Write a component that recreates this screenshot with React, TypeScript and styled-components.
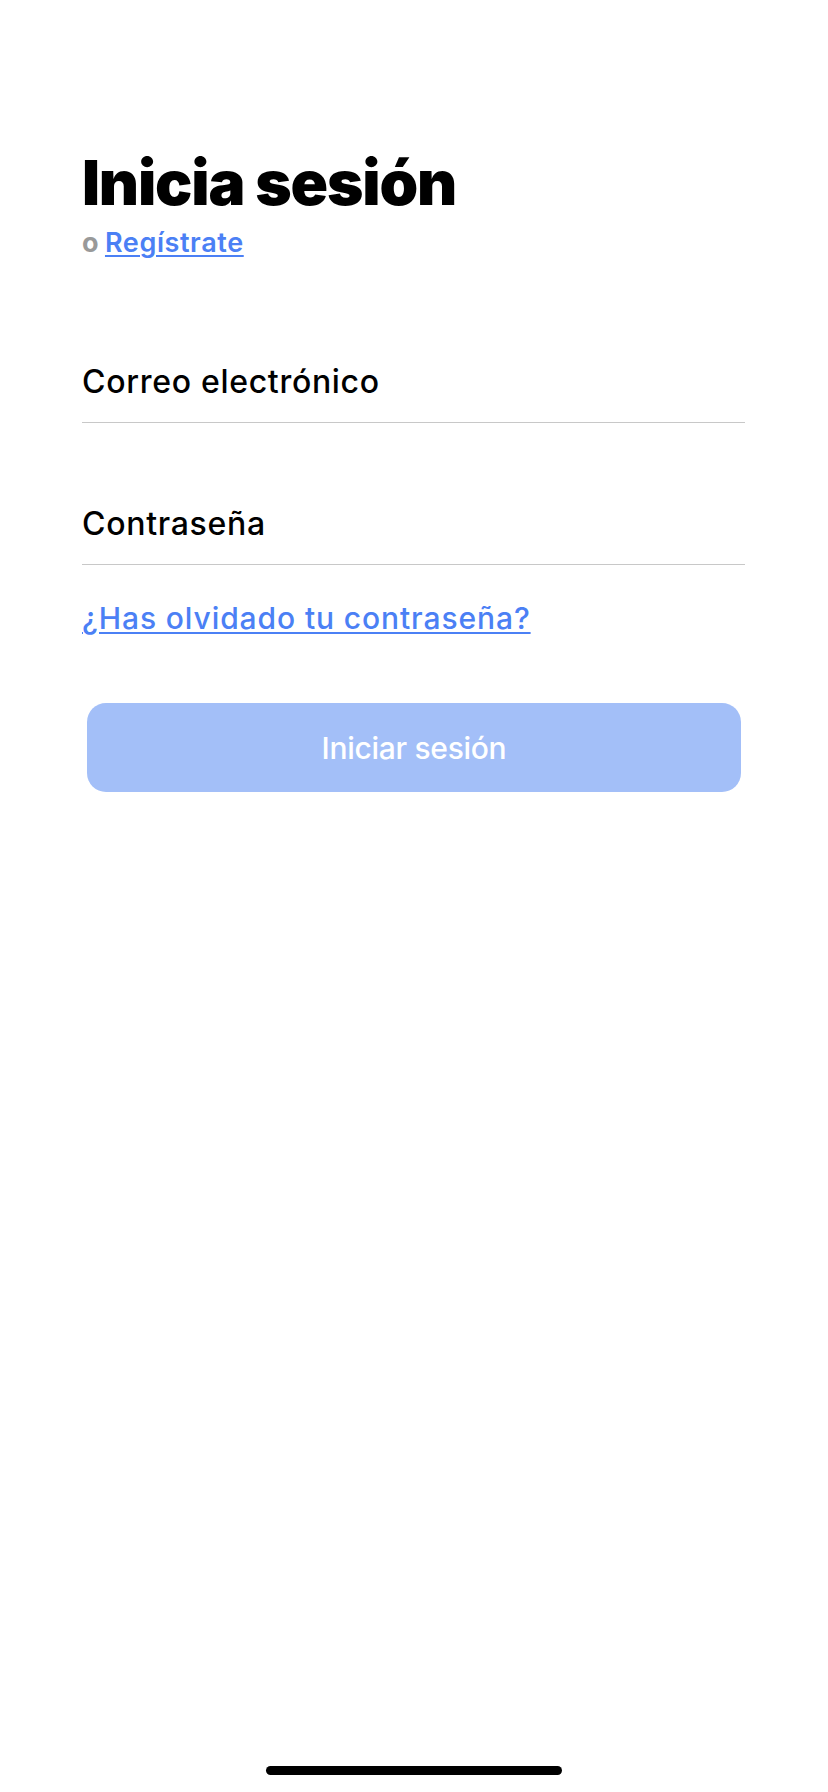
import React from "react";
import styled, { createGlobalStyle } from "styled-components";

const Global = createGlobalStyle`
  html, body { margin: 0; padding: 0; background: #ffffff; }
  body { font-family: Inter, "Noto Sans", "Liberation Sans", sans-serif; -webkit-font-smoothing: antialiased; }
  * { box-sizing: border-box; }
`;

const Screen = styled.div`
  width: 828px;
  height: 1792px;
  background: #fff;
  display: flex;
  flex-direction: column;
`;

const Content = styled.main`
  flex: 1;
  padding: 145px 83px 0 82px;
  display: flex;
  flex-direction: column;
`;

const Title = styled.h1`
  margin: 0;
  font-size: 62px;
  line-height: 76px;
  font-weight: 900;
  letter-spacing: -1.2px;
  color: #000;
`;

const Subtitle = styled.p`
  margin: 6px 0 0;
  font-size: 27px;
  line-height: 32px;
  font-weight: 700;
  color: #999999;
`;

const Link = styled.a<{ $size: number; $weight: number; $spacing: number }>`
  color: #4b80f5;
  text-decoration: underline;
  text-underline-offset: 3px;
  text-decoration-thickness: 2px;
  font-size: ${(p) => p.$size}px;
  font-weight: ${(p) => p.$weight};
  letter-spacing: ${(p) => p.$spacing}px;
  cursor: pointer;
`;

const Form = styled.form`
  margin-top: 82px;
  display: flex;
  flex-direction: column;
  gap: 60px;
`;

const Field = styled.label`
  display: flex;
  align-items: center;
  height: 82px;
  border-bottom: 1.5px solid #c8c8c8;
`;

const FieldText = styled.span`
  font-size: 32px;
  font-weight: 500;
  color: #000;
  letter-spacing: 0.7px;
`;

const ForgotRow = styled.div`
  margin-top: 33px;
  line-height: 40px;
`;

const Button = styled.button`
  margin: 60px 4px 0 5px;
  height: 89px;
  border: none;
  border-radius: 19px;
  background: #a3bff8;
  color: #fff;
  font-family: inherit;
  font-size: 30px;
  font-weight: 500;
  letter-spacing: -0.3px;
`;

const HomeBar = styled.div`
  align-self: center;
  width: 296px;
  height: 9px;
  border-radius: 5px;
  background: #000;
  margin-bottom: 17px;
`;

export default function App() {
  return (
    <>
      <Global />
      <Screen>
        <Content>
          <Title>Inicia sesión</Title>
          <Subtitle>
            o{" "}
            <Link $size={27} $weight={600} $spacing={0.6}>
              Regístrate
            </Link>
          </Subtitle>
          <Form onSubmit={(e) => e.preventDefault()}>
            <Field>
              <FieldText>Correo electrónico</FieldText>
            </Field>
            <Field>
              <FieldText>Contraseña</FieldText>
            </Field>
          </Form>
          <ForgotRow>
            <Link $size={30} $weight={500} $spacing={0.9}>
              ¿Has olvidado tu contraseña?
            </Link>
          </ForgotRow>
          <Button type="button">Iniciar sesión</Button>
        </Content>
        <HomeBar />
      </Screen>
    </>
  );
}
